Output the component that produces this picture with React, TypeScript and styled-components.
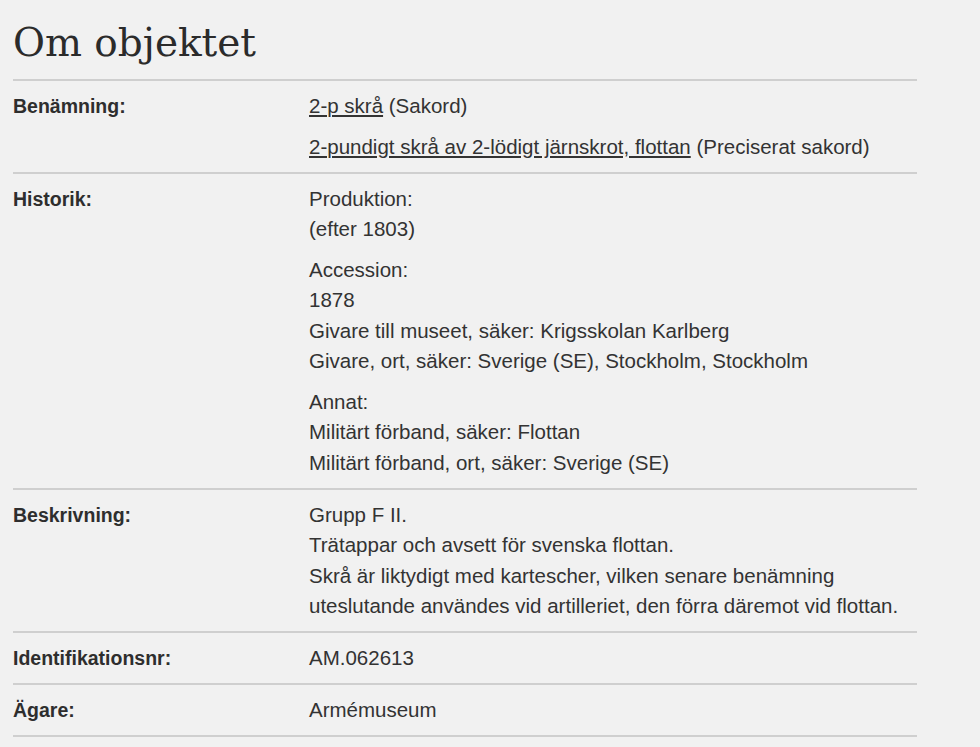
import React from "react";
import styled, { createGlobalStyle } from "styled-components";

const Global = createGlobalStyle`
  html, body { margin: 0; padding: 0; background: #f1f1f1; }
  body { font-family: "Liberation Sans", Arial, sans-serif; color: #333; }
`;

const Page = styled.div`
  width: 904px;
  padding: 18px 0 0 13px;
`;

const Title = styled.h1`
  margin: 0;
  font-family: "DejaVu Serif", serif;
  font-weight: normal;
  font-size: 39px;
  line-height: 50px;
  color: #2b2b2b;
  padding-bottom: 11px;
  border-bottom: 2px solid #cfcfcf;
`;

const List = styled.dl`
  margin: 0;
`;

const Row = styled.div`
  display: grid;
  grid-template-columns: 296px 1fr;
  padding: 10px 0 9.5px;
  border-bottom: 2px solid #cfcfcf;
`;

const Label = styled.dt`
  font-weight: bold;
  font-size: 19.5px;
  line-height: 30.5px;
  color: #2e2e2e;
`;

const Value = styled.dd`
  margin: 0;
  font-size: 20.5px;
  line-height: 30.5px;
`;

const Group = styled.div`
  & + & { margin-top: 10px; }
`;

const Link = styled.a`
  color: #333;
  text-decoration: underline;
  text-underline-offset: 2px;
`;

const Line = styled.div``;

export default function App() {
  return (
    <Page>
      <Global />
      <Title>Om objektet</Title>
      <List>
        <Row>
          <Label>Benämning:</Label>
          <Value>
            <Group>
              <Link href="#">2-p skrå</Link> (Sakord)
            </Group>
            <Group>
              <Link href="#">2-pundigt skrå av 2-lödigt järnskrot, flottan</Link> (Preciserat sakord)
            </Group>
          </Value>
        </Row>
        <Row>
          <Label>Historik:</Label>
          <Value>
            <Group>
              <Line>Produktion:</Line>
              <Line>(efter 1803)</Line>
            </Group>
            <Group>
              <Line>Accession:</Line>
              <Line>1878</Line>
              <Line>Givare till museet, säker: Krigsskolan Karlberg</Line>
              <Line>Givare, ort, säker: Sverige (SE), Stockholm, Stockholm</Line>
            </Group>
            <Group>
              <Line>Annat:</Line>
              <Line>Militärt förband, säker: Flottan</Line>
              <Line>Militärt förband, ort, säker: Sverige (SE)</Line>
            </Group>
          </Value>
        </Row>
        <Row>
          <Label>Beskrivning:</Label>
          <Value>
            <Line>Grupp F II.</Line>
            <Line>Trätappar och avsett för svenska flottan.</Line>
            <Line>Skrå är liktydigt med kartescher, vilken senare benämning</Line>
            <Line>uteslutande användes vid artilleriet, den förra däremot vid flottan.</Line>
          </Value>
        </Row>
        <Row>
          <Label>Identifikationsnr:</Label>
          <Value>AM.062613</Value>
        </Row>
        <Row>
          <Label>Ägare:</Label>
          <Value>Armémuseum</Value>
        </Row>
      </List>
    </Page>
  );
}
